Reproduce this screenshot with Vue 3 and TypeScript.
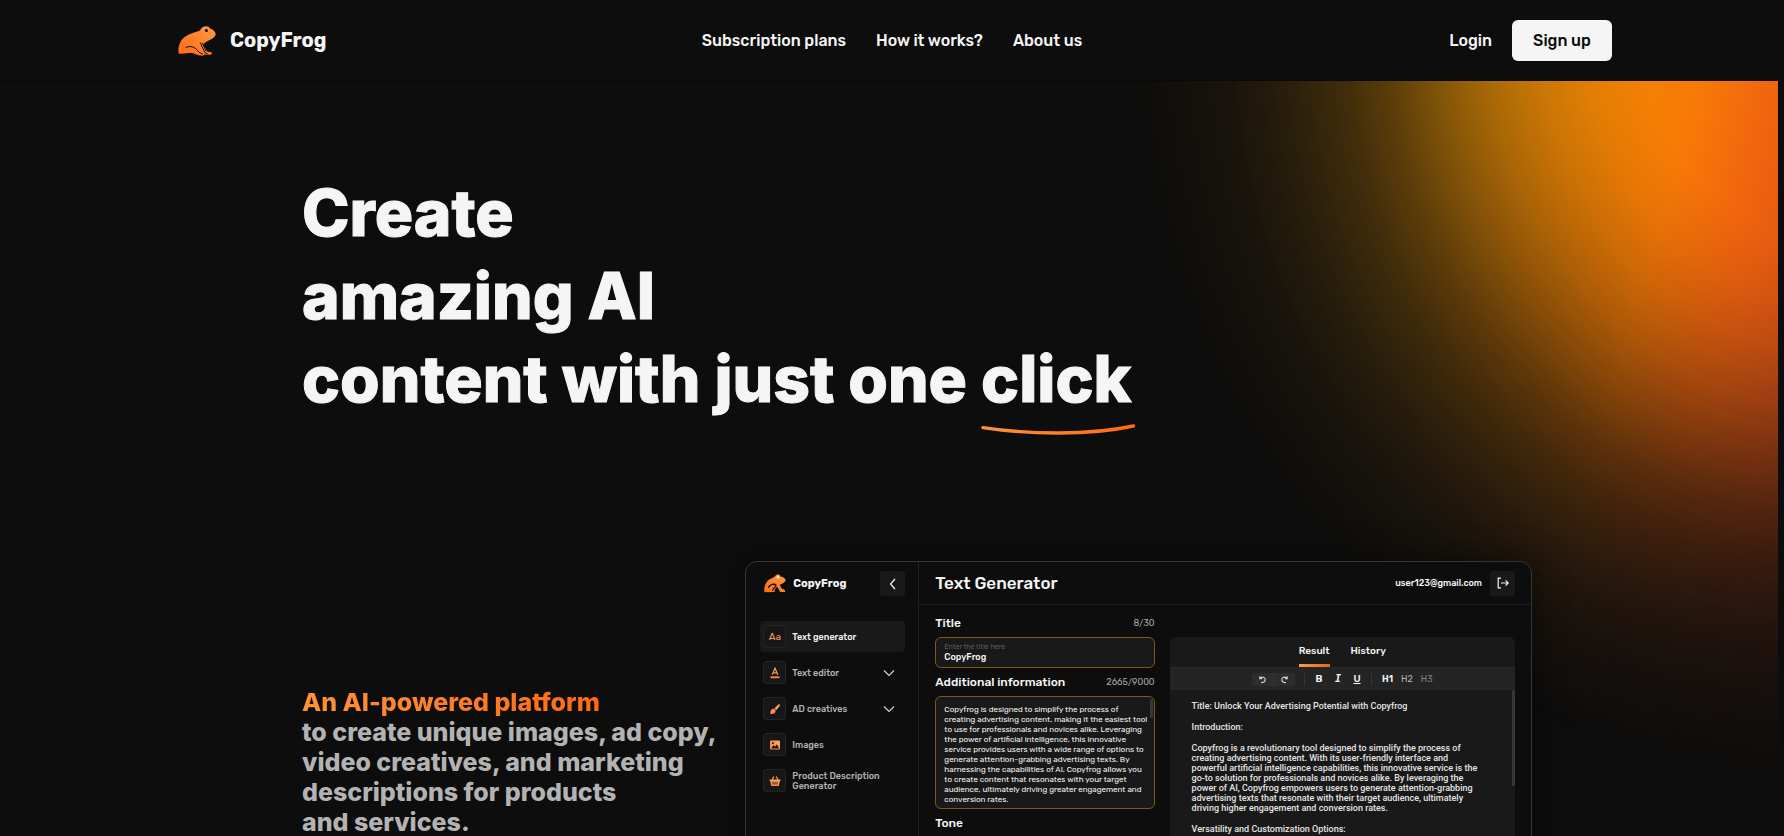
<script setup lang="ts">
import { ref } from 'vue'

interface MenuItem {
  label: string
  icon: 'aa' | 'editor' | 'brush' | 'image' | 'basket'
  expandable?: boolean
}

const navLinks: string[] = ['Subscription plans', 'How it works?', 'About us']

const menu: MenuItem[] = [
  { label: 'Text generator', icon: 'aa' },
  { label: 'Text editor', icon: 'editor', expandable: true },
  { label: 'AD creatives', icon: 'brush', expandable: true },
  { label: 'Images', icon: 'image' },
  { label: 'Product Description Generator', icon: 'basket' },
]
const activeItem = ref('Text generator')

const tabs = ['Result', 'History'] as const
const activeTab = ref<(typeof tabs)[number]>('Result')

const title = ref('CopyFrog')
const infoLines = [
  'Copyfrog is designed to simplify the process of',
  'creating advertising content, making it the easiest tool',
  'to use for professionals and novices alike. Leveraging',
  'the power of artificial intelligence, this innovative',
  'service provides users with a wide range of options to',
  'generate attention-grabbing advertising texts. By',
  'harnessing the capabilities of AI, Copyfrog allows you',
  'to create content that resonates with your target',
  'audience, ultimately driving greater engagement and',
  'conversion rates.',
]
const info = ref(infoLines.join('\n'))

const introLines = [
  'Copyfrog is a revolutionary tool designed to simplify the process of',
  'creating advertising content. With its user-friendly interface and',
  'powerful artificial intelligence capabilities, this innovative service is the',
  'go-to solution for professionals and novices alike. By leveraging the',
  'power of AI, Copyfrog empowers users to generate attention-grabbing',
  'advertising texts that resonate with their target audience, ultimately',
  'driving higher engagement and conversion rates.',
]
</script>

<template>
  <div class="page">
    <svg class="defs" width="0" height="0" aria-hidden="true">
      <defs>
        <linearGradient id="orange" x1="1" y1="0" x2="0" y2="1">
          <stop offset="0" stop-color="#ff9a45" />
          <stop offset="1" stop-color="#ff6a13" />
        </linearGradient>
        <linearGradient id="soft" x1="0" y1="1" x2="1" y2="0">
          <stop offset="0" stop-color="#ff7f3a" />
          <stop offset="1" stop-color="#f3b06a" />
        </linearGradient>
      </defs>
    </svg>

    <header class="topbar">
      <div class="topbar-inner">
        <a class="brand" href="#">
          <svg class="frog" viewBox="4 6 38 31" aria-hidden="true">
            <path
              fill="url(#orange)"
              d="M5 34.8C3.6 32 4.3 22.8 11 17.8C16 14.2 21.5 13.4 26.2 11.6C26.8 7.6 33.8 4.9 36.4 9.8C39.4 10.4 41.6 13 41.7 15.4C40.6 19.3 35.5 20.7 31.6 23.2C30 24.3 29.2 25.2 29.8 26.6L33.2 32.6L37.8 33.4L38 34.4L36.4 35.8L30.4 35.6L29.6 36.6H25.4L22.6 35.4C18.6 33.6 13.5 33.7 10.4 34.6Z"
            />
            <path
              fill="none"
              stroke="#0d0d0d"
              stroke-width="1"
              stroke-linecap="round"
              d="M12 28.4C16.5 26.2 21 28.2 23.6 31.6C25 33.6 26.8 34.6 28.6 34.8M26.4 23.8L30.6 33.2L33.4 34.8M28.6 24.2L31.6 31.6"
            />
            <circle cx="32.4" cy="11.4" r="1.5" fill="#0d0d0d" />
          </svg>
          <span>CopyFrog</span>
        </a>
        <nav class="nav" aria-label="Main">
          <a v-for="link in navLinks" :key="link" href="#">{{ link }}</a>
        </nav>
        <div class="account">
          <a class="login" href="#">Login</a>
          <button class="signup" type="button">Sign up</button>
        </div>
      </div>
    </header>

    <main class="hero">
      <div class="glow" aria-hidden="true"></div>
      <div class="hero-inner">
        <h1>
          Create<br />amazing AI<br />content with just one
          <span class="click">click<svg viewBox="0 0 154 12" preserveAspectRatio="none" aria-hidden="true">
            <defs>
              <linearGradient id="swoosh" x1="0" y1="0" x2="1" y2="0">
                <stop offset="0" stop-color="#ff9238" />
                <stop offset="1" stop-color="#ff6a13" />
              </linearGradient>
            </defs>
            <path
              d="M2 3.6C48 10.6 108 11.6 152 2"
              fill="none"
              stroke="url(#swoosh)"
              stroke-width="3.4"
              stroke-linecap="round"
            />
          </svg></span>
        </h1>

        <div class="showcase">
          <p class="lead">
            <span class="accent">An AI-powered platform</span><br />
            to create unique images, ad copy,<br />
            video creatives, and marketing<br />
            descriptions for products<br />
            and services.
          </p>

          <section class="app" aria-label="Text Generator">
            <aside class="sidebar">
              <div class="side-head">
                <svg class="mini-frog" viewBox="17 26 68 56" aria-hidden="true">
                  <path
                    fill="url(#orange)"
                    d="M19 81C15 66 22 46 38 39C45 36 49 34 52 31C55 24 66 25 68 32C76 33 84 39 84 44C83 50 75 54 67 57C66 61 70 67 74 71C80 72 83 75 82 80H67L58 64C53 68 48 73 50 80Z"
                  />
                  <path
                    fill="none"
                    stroke="#0d0d0d"
                    stroke-width="4"
                    stroke-linecap="round"
                    d="M31 66C36 56 50 54 54 59C55 64 44 69 44 75"
                  />
                  <circle cx="60" cy="34" r="5" fill="#ffd9b0" />
                </svg>
                <span class="side-name">CopyFrog</span>
                <button class="square" type="button" aria-label="Collapse menu">
                  <svg viewBox="0 0 12 12"><path d="M8 1L3.5 6L8 11" /></svg>
                </button>
              </div>
              <ul class="menu">
                <li v-for="item in menu" :key="item.label">
                  <button
                    type="button"
                    class="menu-item"
                    :class="{ active: item.label === activeItem }"
                    @click="activeItem = item.label"
                  >
                    <span class="tile">
                      <span v-if="item.icon === 'aa'" class="aa">Aa</span>
                      <svg v-else-if="item.icon === 'editor'" viewBox="0 0 12 12">
                        <path d="M3.2 7.8L6 1.2L8.8 7.8M4.2 5.8H7.8" fill="none" stroke="url(#soft)" stroke-width="1.2" />
                        <rect x="1.5" y="9.4" width="9" height="1.8" fill="#f98c48" />
                      </svg>
                      <svg v-else-if="item.icon === 'brush'" viewBox="0 0 12 12">
                        <path d="M1 10.6C1.8 9.6 1 7.6 2.8 6.2C4.6 5 7.2 6.6 6.6 8.6C5.8 10.8 3 11.4 1 10.6Z" fill="#ff8a4c" />
                        <path d="M5.4 5.4L9.4 1.4C10.2 .6 11.6 1.8 10.8 2.8L7.4 7Z" fill="#f3b06a" />
                      </svg>
                      <svg v-else-if="item.icon === 'image'" viewBox="0 0 12 12">
                        <rect x="1" y="1.4" width="10" height="9.2" rx="1" fill="url(#soft)" />
                        <path d="M2.2 9.4L4.6 6L6.2 7.8L8 5.2L10 9.4Z" fill="#171717" />
                        <circle cx="3.9" cy="3.9" r="1" fill="#171717" />
                      </svg>
                      <svg v-else viewBox="0 0 12 12">
                        <path d="M3 5L4.8 1.4M9 5L7.2 1.4" stroke="#f3a868" stroke-width="1.1" fill="none" />
                        <path d="M.6 4.4H11.4V6H10.8L9.8 11H2.2L1.2 6H.6Z" fill="url(#soft)" />
                        <path d="M4 6.8V9.6M6 6.8V9.6M8 6.8V9.6" stroke="#171717" stroke-width=".9" />
                      </svg>
                    </span>
                    <span class="menu-label">{{ item.label }}</span>
                    <svg v-if="item.expandable" class="chevron" viewBox="0 0 12 12">
                      <path d="M1 3.5L6 8.5L11 3.5" />
                    </svg>
                  </button>
                </li>
              </ul>
            </aside>

            <div class="workspace">
              <div class="work-head">
                <h2>Text Generator</h2>
                <span class="email">user123@gmail.com</span>
                <button class="square" type="button" aria-label="Log out">
                  <svg viewBox="0 0 12 12">
                    <path d="M4 1.2H1.2V10.8H4M4 6H11M8.6 3.4L11.2 6L8.6 8.6" />
                  </svg>
                </button>
              </div>

              <div class="panes">
                <form class="form" @submit.prevent>
                  <div class="row">
                    <h3>Title</h3>
                    <span class="count">8/30</span>
                  </div>
                  <div class="field">
                    <label for="title">Enter the title here</label>
                    <input id="title" v-model="title" type="text" />
                  </div>
                  <div class="row">
                    <h3><label for="info">Additional information</label></h3>
                    <span class="count">2665/9000</span>
                  </div>
                  <div class="area">
                    <textarea id="info" v-model="info" rows="10" wrap="off"></textarea>
                    <span class="thumb"></span>
                  </div>
                  <div class="row">
                    <h3>Tone</h3>
                  </div>
                </form>

                <div class="result">
                  <div class="tabs" role="tablist">
                    <button
                      v-for="tab in tabs"
                      :key="tab"
                      type="button"
                      role="tab"
                      :aria-selected="tab === activeTab"
                      @click="activeTab = tab"
                    >
                      {{ tab }}
                    </button>
                  </div>
                  <div class="toolbar">
                    <div class="history">
                      <button type="button" aria-label="Undo">
                        <svg viewBox="0 0 10 10"><path d="M2 1.4V4.2H4.8M2.2 4C4.4 1 8.4 2.6 8 5.6C7.8 7.6 6 8.6 3.4 8.4" /></svg>
                      </button>
                      <button type="button" aria-label="Redo">
                        <svg viewBox="0 0 10 10"><path d="M8 1.4V4.2H5.2M7.8 4C5.6 1 1.6 2.6 2 5.6C2.2 7.6 4 8.6 6.6 8.4" /></svg>
                      </button>
                    </div>
                    <div class="marks">
                      <button type="button"><b>B</b></button>
                      <button type="button"><i>I</i></button>
                      <button type="button"><u>U</u></button>
                    </div>
                    <div class="heads">
                      <button type="button" class="h-1">H1</button>
                      <button type="button" class="h-2">H2</button>
                      <button type="button" class="h-3">H3</button>
                    </div>
                  </div>
                  <article class="output">
                    <p>Title: Unlock Your Advertising Potential with Copyfrog</p>
                    <p>Introduction:</p>
                    <p>
                      <template v-for="line in introLines" :key="line">{{ line }}<br /></template>
                    </p>
                    <p>Versatility and Customization Options:</p>
                    <span class="thumb long"></span>
                  </article>
                </div>
              </div>
            </div>
          </section>
        </div>
      </div>
    </main>
  </div>
</template>

<style>
body {
  background: #0d0d0d;
}
</style>

<style scoped>
.page {
  display: flex;
  flex-direction: column;
  height: 100vh;
  overflow: hidden;
  background: #0d0d0d;
  color: #f5f5f5;
  font-family: Rubik, Roboto, sans-serif;
}
.page *,
.page *::before {
  box-sizing: border-box;
}
.defs {
  position: absolute;
}
button {
  padding: 0;
  border: 0;
  background: none;
  color: inherit;
  font: inherit;
  cursor: pointer;
}
a {
  color: inherit;
  text-decoration: none;
}
h1,
h2,
h3,
p,
ul {
  margin: 0;
  padding: 0;
}
ul {
  list-style: none;
}

.topbar {
  flex: none;
  border-bottom: 1px solid #090909;
}
.topbar-inner {
  display: grid;
  grid-template-columns: 1fr auto 1fr;
  align-items: center;
  max-width: 1440px;
  height: 80px;
  margin: 0 auto;
  font-size: 16px;
  font-weight: 500;
}
.brand {
  display: flex;
  align-items: center;
  gap: 14px;
  padding-left: 6px;
  font-size: 20px;
  font-weight: 700;
}
.frog {
  width: 38px;
  height: 31px;
}
.nav {
  display: flex;
  gap: 30px;
}
.account {
  display: flex;
  justify-content: flex-end;
  align-items: center;
  gap: 20px;
}
.signup {
  width: 100px;
  height: 41px;
  border-radius: 6px;
  background: #f5f5f5;
  color: #0d0d0d;
}

.hero {
  position: relative;
  flex: 1;
  min-height: 0;
}
.glow {
  position: absolute;
  top: 0;
  right: 6px;
  width: 680px;
  height: 100%;
  background: linear-gradient(105deg, #f29a04 40%, #f28404 59%, #f87a06 68%, #f0640e 77%, #d04a18 92%);
  mask-image: radial-gradient(
    ellipse 720px 760px at calc(100% + 72px) -51px,
    #000 29%,
    rgba(0, 0, 0, 0.94) 36%,
    rgba(0, 0, 0, 0.83) 43%,
    rgba(0, 0, 0, 0.69) 50%,
    rgba(0, 0, 0, 0.52) 57%,
    rgba(0, 0, 0, 0.35) 64%,
    rgba(0, 0, 0, 0.22) 71%,
    rgba(0, 0, 0, 0.12) 79%,
    rgba(0, 0, 0, 0.05) 87%,
    transparent 100%
  );
}
.hero-inner {
  position: relative;
  max-width: 1180px;
  margin: 0 auto;
  padding-top: 90px;
}
h1 {
  font-family: Inter, sans-serif;
  font-size: 64px;
  font-weight: 800;
  line-height: 83px;
  -webkit-text-stroke: 1px #f5f5f5;
}
.click {
  position: relative;
  display: inline-block;
}
.click svg {
  position: absolute;
  left: 0;
  bottom: -16px;
  width: calc(100% + 4px);
  height: 12px;
}
.showcase {
  display: grid;
  grid-template-columns: 443fr 786fr;
  align-items: start;
  margin: 141px -50px 0 0;
}
.lead {
  padding-top: 126px;
  color: #b3b3b3;
  font-family: Inter, sans-serif;
  font-size: 25px;
  font-weight: 800;
  line-height: 30px;
  white-space: nowrap;
}
.accent {
  background: linear-gradient(90deg, #ff9238, #ff6a13);
  background-clip: text;
  color: transparent;
}

.app {
  display: grid;
  grid-template-columns: 173px 1fr;
  min-height: 400px;
  border: 1px solid #363636;
  border-radius: 12px;
  background: #0d0d0d;
  box-shadow: 0 0 32px rgba(0, 0, 0, 0.5);
}
.sidebar {
  padding: 9px 13px 0 14px;
  border-right: 1px solid #1f1f1f;
}
.side-head {
  display: flex;
  align-items: center;
  gap: 7px;
  padding-left: 4px;
}
.mini-frog {
  width: 22px;
  height: 19px;
}
.side-name {
  flex: 1;
  font-size: 11px;
  font-weight: 700;
}
.square {
  display: grid;
  place-items: center;
  width: 25px;
  height: 25px;
  border-radius: 3px;
  background: #191919;
}
.square svg,
.chevron {
  width: 12px;
  height: 12px;
  fill: none;
  stroke: #f5f5f5;
  stroke-width: 1.2;
}
.menu {
  display: grid;
  gap: 5px;
  margin-top: 25px;
}
.menu-item {
  display: flex;
  align-items: center;
  gap: 6px;
  width: 100%;
  height: 31px;
  padding: 0 10px 0 3px;
  border-radius: 4px;
  color: #b3b3b3;
  font-size: 9px;
  font-weight: 500;
  line-height: 10px;
  text-align: left;
}
.menu-item.active {
  background: #191919;
  color: #f5f5f5;
}
.tile {
  display: grid;
  flex: none;
  place-items: center;
  width: 23px;
  height: 23px;
  border: 1px solid #242424;
  border-radius: 3px;
  background: #171717;
}
.tile svg {
  width: 12px;
  height: 12px;
}
.aa {
  color: #f09a5c;
  font-size: 10px;
  font-weight: 400;
}
.menu-label {
  flex: 1;
}
.chevron {
  stroke: #d0d0d0;
}

.work-head {
  display: flex;
  align-items: center;
  gap: 8px;
  height: 43px;
  padding: 0 16px;
  border-bottom: 1px solid #1f1f1f;
}
h2 {
  flex: 1;
  font-size: 17px;
  font-weight: 500;
}
.email {
  font-size: 9px;
  font-weight: 500;
}
.panes {
  display: grid;
  grid-template-columns: 219fr 345fr;
  gap: 15px;
  padding: 0 16px;
}
.row {
  display: flex;
  justify-content: space-between;
  align-items: center;
  height: 28px;
}
.form {
  padding-top: 4px;
}
h3 {
  font-size: 12px;
  font-weight: 500;
}
.count {
  color: #a8a8a8;
  font-size: 9px;
}
.field,
.area {
  border: 1px solid #805715;
  border-radius: 6px;
  background: #191919;
}
.field {
  display: flex;
  flex-direction: column;
  height: 31px;
  padding: 4px 8px;
}
.field label {
  color: #5c5c5c;
  font-size: 7px;
  line-height: 9px;
}
.field input {
  width: 100%;
  height: 13px;
  padding: 0;
  border: 0;
  outline: 0;
  background: none;
  color: #f5f5f5;
  font: 500 9px/13px Rubik, Roboto, sans-serif;
}
.area {
  position: relative;
  height: 113px;
  padding: 8px 4px 3px 8px;
}
.area textarea {
  display: block;
  width: 100%;
  height: 100px;
  padding: 0;
  border: 0;
  outline: 0;
  overflow: hidden;
  resize: none;
  background: none;
  color: #f5f5f5;
  font: 400 8px/10px Rubik, Roboto, sans-serif;
}
.thumb {
  position: absolute;
  top: 2px;
  right: 1px;
  width: 3px;
  height: 19px;
  border-radius: 2px;
  background: #383838;
}
.thumb.long {
  top: 0;
  right: 0;
  height: 96px;
}

.result {
  margin-top: 32px;
  border-radius: 6px 6px 0 0;
  overflow: hidden;
  background: #191919;
}
.tabs {
  display: flex;
  justify-content: center;
  gap: 21px;
  height: 31px;
  border-bottom: 1px solid #282828;
  font-size: 10px;
  font-weight: 500;
}
.tabs button {
  height: 30px;
  border-bottom: 3px solid transparent;
}
.tabs button[aria-selected='true'] {
  border-image: linear-gradient(90deg, #ff9a45, #e0661a) 1;
  border-width: 0 0 3px;
  border-style: solid;
}
.toolbar {
  display: flex;
  justify-content: center;
  align-items: center;
  height: 22px;
  background: #242424;
  font-size: 9px;
}
.history {
  display: flex;
  width: 43px;
  height: 13px;
  border-radius: 3px;
  background: #2d2d2d;
}
.history button {
  display: grid;
  flex: 1;
  place-items: center;
}
.history button + button {
  border-left: 1px solid #363636;
}
.history svg {
  width: 9px;
  height: 9px;
  fill: none;
  stroke: #d8d8d8;
  stroke-width: 1.2;
}
.marks {
  display: flex;
  gap: 3px;
  margin: 0 10px 0 9px;
  padding: 0 6px;
  border: solid #363636;
  border-width: 0 1px;
}
.marks button {
  width: 16px;
  height: 13px;
  font-size: 10px;
  font-weight: 600;
  line-height: 12px;
}
.marks b {
  font-weight: 600;
}
.marks u {
  font-weight: 500;
}
.marks i {
  font-family: 'DejaVu Sans Mono', monospace;
}
.heads {
  display: flex;
  gap: 8px;
}
.heads .h-1 {
  font-weight: 600;
}
.heads .h-2 {
  color: #b3b3b3;
}
.heads .h-3 {
  color: #808080;
}
.output {
  position: relative;
  display: grid;
  gap: 11px;
  padding: 11px 22px;
  color: #e6e6e6;
  font-family: Roboto, sans-serif;
  font-size: 9px;
  font-weight: 500;
  line-height: 10px;
  white-space: nowrap;
}
</style>
